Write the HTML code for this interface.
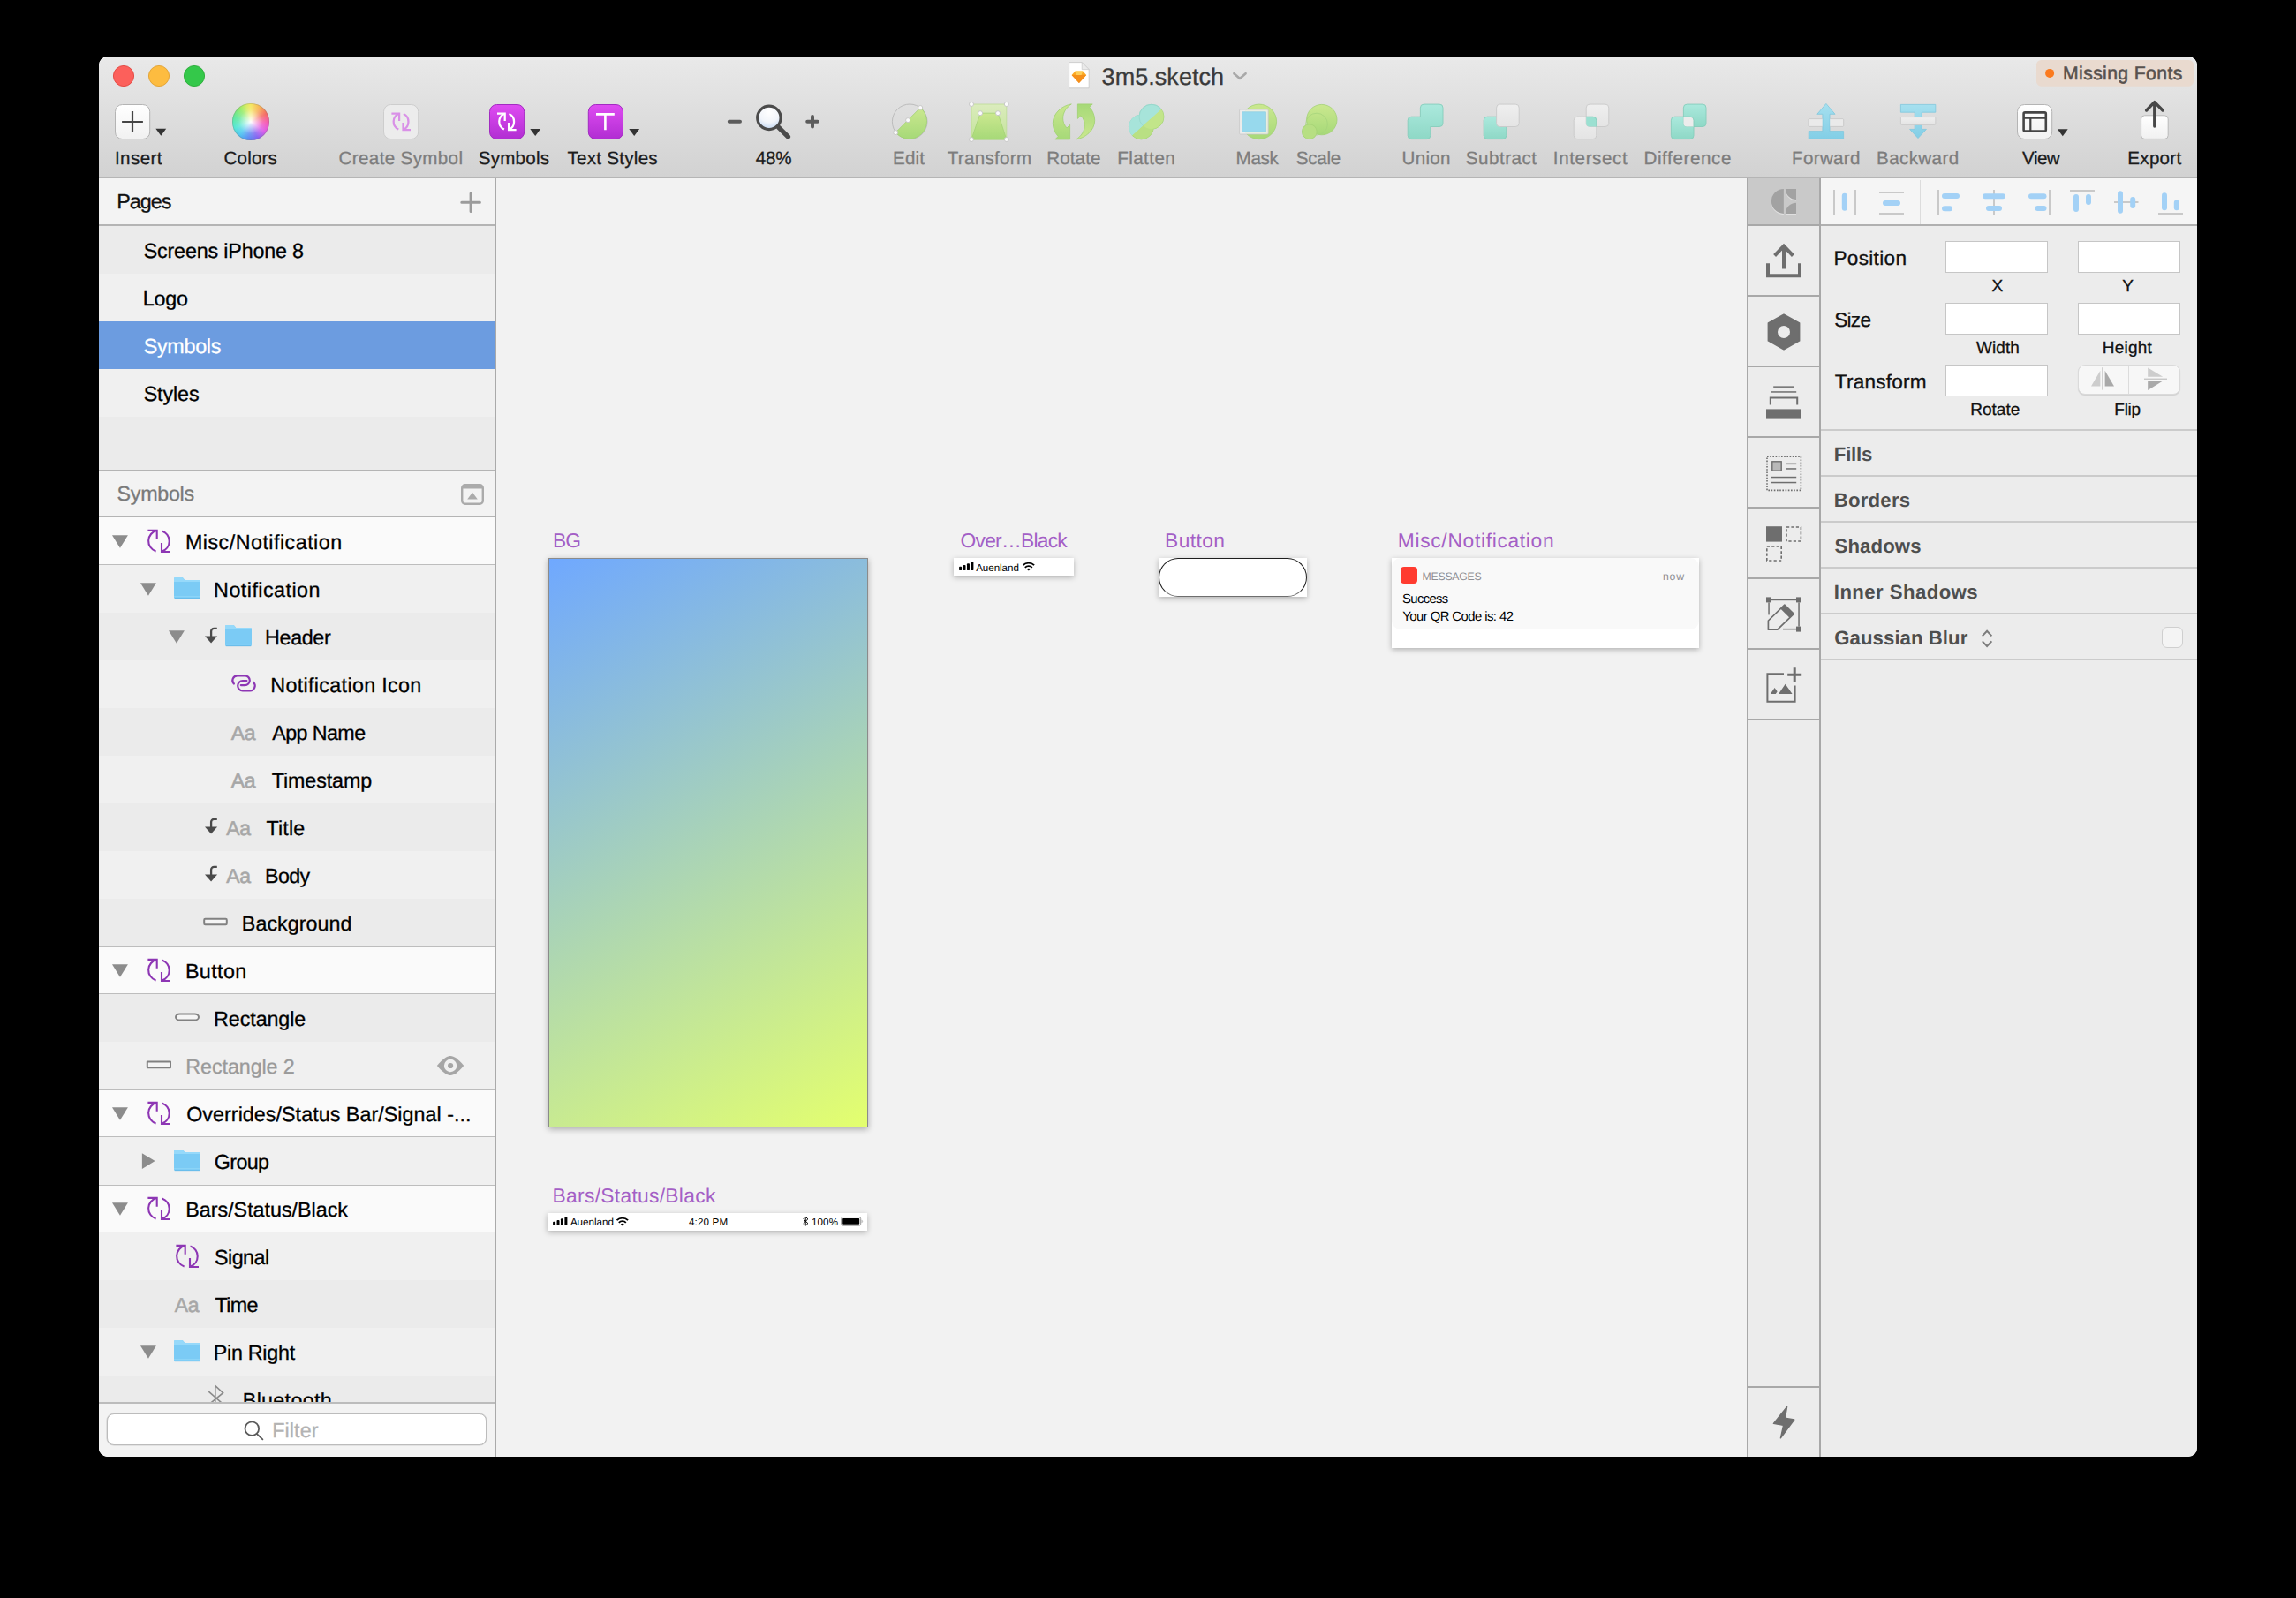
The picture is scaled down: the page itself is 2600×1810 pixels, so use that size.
<!DOCTYPE html>
<html><head><meta charset="utf-8"><title>3m5.sketch</title>
<style>
html,body{margin:0;padding:0;background:#000;}
body{width:2600px;height:1810px;position:relative;overflow:hidden;font-family:"Liberation Sans",sans-serif;}
.a{position:absolute;box-sizing:border-box;}
.t{position:absolute;white-space:pre;text-rendering:geometricPrecision;}
svg{position:absolute;overflow:visible;}

</style></head>
<body>
<div class="a" style="left:112px;top:64px;width:2376px;height:1586px;background:#f2f2f2;border-radius:10px 10px 10px 10px;"></div><div class="a" style="left:112px;top:64px;width:2376px;height:136px;background:linear-gradient(#e9e9e9,#e2e2e2 30%,#d2d2d2);border-radius:10px 10px 0 0;box-shadow:inset 0 1px 0 #f4f4f4;"></div><div class="a" style="left:112px;top:200px;width:2376px;height:2px;background:#b5b5b5;"></div><div class="a" style="left:112px;top:202px;width:448px;height:1448px;background:#f0f0f0;border-radius:0 0 0 10px;"></div><div class="a" style="left:560px;top:202px;width:2px;height:1448px;background:#aaaaaa;"></div><div class="a" style="left:112px;top:202px;width:448px;height:52px;background:#f3f3f3;"></div><div class="a" style="left:112px;top:254px;width:448px;height:2px;background:#b4b4b4;"></div><div class="a" style="left:112px;top:256px;width:448px;height:54px;background:#ebebeb;"></div><div class="a" style="left:112px;top:310px;width:448px;height:54px;background:#f0f0f0;"></div><div class="a" style="left:112px;top:364px;width:448px;height:54px;background:#6c9ce0;"></div><div class="a" style="left:112px;top:418px;width:448px;height:54px;background:#f0f0f0;"></div><div class="a" style="left:112px;top:472px;width:448px;height:60px;background:#ebebeb;"></div><div class="a" style="left:112px;top:532px;width:448px;height:2px;background:#b4b4b4;"></div><div class="a" style="left:112px;top:534px;width:448px;height:50px;background:#f3f3f3;"></div><div class="a" style="left:112px;top:584px;width:448px;height:2px;background:#b4b4b4;"></div><div class="a" style="left:112px;top:586px;width:448px;height:54px;background:#fafafa;"></div><div class="a" style="left:112px;top:639px;width:448px;height:1px;background:#bdbdbd;"></div><div class="a" style="left:112px;top:640px;width:448px;height:54px;background:#f0f0f0;"></div><div class="a" style="left:112px;top:694px;width:448px;height:54px;background:#ebebeb;"></div><div class="a" style="left:112px;top:748px;width:448px;height:54px;background:#f0f0f0;"></div><div class="a" style="left:112px;top:802px;width:448px;height:54px;background:#ebebeb;"></div><div class="a" style="left:112px;top:856px;width:448px;height:54px;background:#f0f0f0;"></div><div class="a" style="left:112px;top:910px;width:448px;height:54px;background:#ebebeb;"></div><div class="a" style="left:112px;top:964px;width:448px;height:54px;background:#f0f0f0;"></div><div class="a" style="left:112px;top:1018px;width:448px;height:54px;background:#ebebeb;"></div><div class="a" style="left:112px;top:1072px;width:448px;height:54px;background:#fafafa;"></div><div class="a" style="left:112px;top:1072px;width:448px;height:1px;background:#bdbdbd;"></div><div class="a" style="left:112px;top:1125px;width:448px;height:1px;background:#bdbdbd;"></div><div class="a" style="left:112px;top:1126px;width:448px;height:54px;background:#ebebeb;"></div><div class="a" style="left:112px;top:1180px;width:448px;height:54px;background:#f0f0f0;"></div><div class="a" style="left:112px;top:1234px;width:448px;height:54px;background:#fafafa;"></div><div class="a" style="left:112px;top:1234px;width:448px;height:1px;background:#bdbdbd;"></div><div class="a" style="left:112px;top:1287px;width:448px;height:1px;background:#bdbdbd;"></div><div class="a" style="left:112px;top:1288px;width:448px;height:54px;background:#f0f0f0;"></div><div class="a" style="left:112px;top:1342px;width:448px;height:54px;background:#fafafa;"></div><div class="a" style="left:112px;top:1342px;width:448px;height:1px;background:#bdbdbd;"></div><div class="a" style="left:112px;top:1395px;width:448px;height:1px;background:#bdbdbd;"></div><div class="a" style="left:112px;top:1396px;width:448px;height:54px;background:#f0f0f0;"></div><div class="a" style="left:112px;top:1450px;width:448px;height:54px;background:#ebebeb;"></div><div class="a" style="left:112px;top:1504px;width:448px;height:54px;background:#f0f0f0;"></div><div class="a" style="left:112px;top:1558px;width:448px;height:31px;background:#ebebeb;"></div><div class="a" style="left:112px;top:1589px;width:448px;height:61px;background:#f3f3f3;border-radius:0 0 0 10px;"></div><div class="a" style="left:112px;top:1588px;width:448px;height:2px;background:#bcbcbc;"></div><div class="a" style="left:121px;top:1601px;width:430px;height:36px;background:#fff;border:1px solid #bcbcbc;border-radius:8px;box-shadow:0 0 0 0.6px #d2d2d2;"></div><div class="a" style="left:1978px;top:202px;width:2px;height:1448px;background:#a8a8a8;"></div><div class="a" style="left:1980px;top:202px;width:80px;height:1448px;background:#ececec;"></div><div class="a" style="left:2060px;top:202px;width:2px;height:1448px;background:#a8a8a8;"></div><div class="a" style="left:1980px;top:202px;width:80px;height:52px;background:#c9c9c9;"></div><div class="a" style="left:1980px;top:254px;width:80px;height:2px;background:#a8a8a8;"></div><div class="a" style="left:1980px;top:334px;width:80px;height:2px;background:#a8a8a8;"></div><div class="a" style="left:1980px;top:414px;width:80px;height:2px;background:#a8a8a8;"></div><div class="a" style="left:1980px;top:494px;width:80px;height:2px;background:#a8a8a8;"></div><div class="a" style="left:1980px;top:574px;width:80px;height:2px;background:#a8a8a8;"></div><div class="a" style="left:1980px;top:654px;width:80px;height:2px;background:#a8a8a8;"></div><div class="a" style="left:1980px;top:734px;width:80px;height:2px;background:#a8a8a8;"></div><div class="a" style="left:1980px;top:814px;width:80px;height:2px;background:#a8a8a8;"></div><div class="a" style="left:1980px;top:1570px;width:80px;height:2px;background:#a8a8a8;"></div><div class="a" style="left:2062px;top:202px;width:426px;height:1448px;background:#ececec;border-radius:0 0 10px 0;"></div><div class="a" style="left:2062px;top:202px;width:426px;height:52px;background:#f5f5f5;"></div><div class="a" style="left:2062px;top:254px;width:426px;height:2px;background:#b0b0b0;"></div><div class="a" style="left:2174px;top:204px;width:1px;height:50px;background:#dcdcdc;"></div><div class="a" style="left:2062px;top:486px;width:426px;height:2px;background:#cbcbcb;"></div><div class="a" style="left:2062px;top:538px;width:426px;height:2px;background:#cbcbcb;"></div><div class="a" style="left:2062px;top:590px;width:426px;height:2px;background:#cbcbcb;"></div><div class="a" style="left:2062px;top:642px;width:426px;height:2px;background:#cbcbcb;"></div><div class="a" style="left:2062px;top:694px;width:426px;height:2px;background:#cbcbcb;"></div><div class="a" style="left:2062px;top:746px;width:426px;height:2px;background:#cbcbcb;"></div><div class="a" style="left:2203px;top:273px;width:116px;height:36px;background:#fff;border:1px solid #c6c6c6;"></div><div class="a" style="left:2353px;top:273px;width:116px;height:36px;background:#fff;border:1px solid #c6c6c6;"></div><div class="a" style="left:2203px;top:343px;width:116px;height:36px;background:#fff;border:1px solid #c6c6c6;"></div><div class="a" style="left:2353px;top:343px;width:116px;height:36px;background:#fff;border:1px solid #c6c6c6;"></div><div class="a" style="left:2203px;top:413px;width:116px;height:36px;background:#fff;border:1px solid #c6c6c6;"></div><div class="a" style="left:2353px;top:413px;width:116px;height:34px;background:#f7f7f7;border:1px solid #dadada;border-radius:8px;box-shadow:0 1px 1px rgba(0,0,0,.12);"></div><div class="a" style="left:2410px;top:414px;width:1px;height:32px;background:#dcdcdc;"></div><div class="a" style="left:2448px;top:710px;width:24px;height:24px;background:#f4f4f4;border:1px solid #cfcfcf;border-radius:6px;"></div><div class="a" style="left:621px;top:632px;width:362px;height:645px;background:linear-gradient(150.66deg,#6fa8ff 0%,#e4ff6e 100%);border:1px solid #8b8b8b;background-origin:border-box;box-shadow:0 2px 7px rgba(0,0,0,.3);"></div><div class="a" style="left:1080px;top:632px;width:136px;height:20px;background:#fff;box-shadow:0 2px 6px rgba(0,0,0,.27);"></div><div class="a" style="left:1312px;top:632px;width:168px;height:44px;background:#fff;box-shadow:0 2px 6px rgba(0,0,0,.27);"></div><div class="a" style="left:1312px;top:632px;width:168px;height:44px;background:#fff;border:1px solid #1e1e1e;border-bottom-color:#6e6e6e;border-radius:22px;"></div><div class="a" style="left:1576px;top:632px;width:348px;height:102px;background:#fff;box-shadow:0 2px 6px rgba(0,0,0,.27);"></div><div class="a" style="left:1576px;top:632px;width:348px;height:81px;background:#f9f9f9;border-radius:10px;"></div><div class="a" style="left:1586px;top:642px;width:19px;height:19px;background:#ff3b30;border-radius:4px;"></div><div class="a" style="left:620px;top:1374px;width:362px;height:20px;background:#fff;box-shadow:0 2px 6px rgba(0,0,0,.27);"></div><span class="t" style="left:261.8px;top:818.5px;font-size:23px;line-height:23px;color:#a7a7a7;-webkit-text-stroke:0.55px #a7a7a7;letter-spacing:-0.5px">Aa</span><span class="t" style="left:261.8px;top:872.5px;font-size:23px;line-height:23px;color:#a7a7a7;-webkit-text-stroke:0.55px #a7a7a7;letter-spacing:-0.5px">Aa</span><span class="t" style="left:256.3px;top:926.5px;font-size:23px;line-height:23px;color:#a7a7a7;-webkit-text-stroke:0.55px #a7a7a7;letter-spacing:-0.5px">Aa</span><span class="t" style="left:256.3px;top:980.5px;font-size:23px;line-height:23px;color:#a7a7a7;-webkit-text-stroke:0.55px #a7a7a7;letter-spacing:-0.5px">Aa</span><span class="t" style="left:197.8px;top:1466.5px;font-size:23px;line-height:23px;color:#a7a7a7;-webkit-text-stroke:0.55px #a7a7a7;letter-spacing:-0.5px">Aa</span><svg class="a" style="left:0;top:0;width:2600px;height:1810px;" viewBox="0 0 2600 1810"><defs><clipPath id="cl1"><rect x="112" y="1558" width="448" height="30"/></clipPath></defs><path d="M127 606.2h17.9l-8.95 14.6z" fill="#8c8c8c"/><g fill="none" stroke="#8d36b4" stroke-width="2.1" stroke-linejoin="miter"><path d="M177.6 600.9A12.2 12.2 0 0 0 176.6 624.4"/><path d="M183.5 601.5A12.2 12.2 0 0 1 183.4 624.6"/><path d="M167.4 600.9H177.7V610.7"/><path d="M183 615V625H193"/></g><path d="M127 1092.2h17.9l-8.95 14.6z" fill="#8c8c8c"/><g fill="none" stroke="#8d36b4" stroke-width="2.1" stroke-linejoin="miter"><path d="M177.6 1086.9A12.2 12.2 0 0 0 176.6 1110.4"/><path d="M183.5 1087.5A12.2 12.2 0 0 1 183.4 1110.6"/><path d="M167.4 1086.9H177.7V1096.7"/><path d="M183 1101V1111H193"/></g><path d="M127 1254.2h17.9l-8.95 14.6z" fill="#8c8c8c"/><g fill="none" stroke="#8d36b4" stroke-width="2.1" stroke-linejoin="miter"><path d="M177.6 1248.9A12.2 12.2 0 0 0 176.6 1272.4"/><path d="M183.5 1249.5A12.2 12.2 0 0 1 183.4 1272.6"/><path d="M167.4 1248.9H177.7V1258.7"/><path d="M183 1263V1273H193"/></g><path d="M127 1362.2h17.9l-8.95 14.6z" fill="#8c8c8c"/><g fill="none" stroke="#8d36b4" stroke-width="2.1" stroke-linejoin="miter"><path d="M177.6 1356.9A12.2 12.2 0 0 0 176.6 1380.4"/><path d="M183.5 1357.5A12.2 12.2 0 0 1 183.4 1380.6"/><path d="M167.4 1356.9H177.7V1366.7"/><path d="M183 1371V1381H193"/></g><path d="M159 660.2h17.9l-8.95 14.6z" fill="#8c8c8c"/><g><path d="M198.5 654h7.3c.8 0 1.3.3 1.8.9l1.6 2.1h16.3c.9 0 1.5.6 1.5 1.5v17.9c0 .9-.6 1.5-1.5 1.5h-27c-.9 0-1.5-.6-1.5-1.5v-20.9c0-.9.6-1.5 1.5-1.5z" fill="#7bcbf5"/><path d="M198.5 654h7.3c.8 0 1.3.3 1.8.9l1.6 2.1h16.3c.9 0 1.5.6 1.5 1.5v.6h-30v-3.6c0-.9.6-1.5 1.5-1.5z" fill="#96d9fa"/><rect x="197" y="675.2" width="30" height="1" fill="#8fd6f8"/><rect x="197.8" y="677.2" width="28.4" height="1" fill="#5fb4e4" opacity=".7"/></g><path d="M191 714.2h17.9l-8.95 14.6z" fill="#8c8c8c"/><path d="M232 720.5h14.1l-7.05 7.9z" fill="#4a4a4a"/><path d="M239.1 721.3v-6.2a3.3 3.3 0 0 1 3.3 -3.3h3.4" fill="none" stroke="#4a4a4a" stroke-width="2.3"/><g><path d="M256.5 708h7.3c.8 0 1.3.3 1.8.9l1.6 2.1h16.3c.9 0 1.5.6 1.5 1.5v17.9c0 .9-.6 1.5-1.5 1.5h-27c-.9 0-1.5-.6-1.5-1.5v-20.9c0-.9.6-1.5 1.5-1.5z" fill="#7bcbf5"/><path d="M256.5 708h7.3c.8 0 1.3.3 1.8.9l1.6 2.1h16.3c.9 0 1.5.6 1.5 1.5v.6h-30v-3.6c0-.9.6-1.5 1.5-1.5z" fill="#96d9fa"/><rect x="255" y="729.2" width="30" height="1" fill="#8fd6f8"/><rect x="255.8" y="731.2" width="28.4" height="1" fill="#5fb4e4" opacity=".7"/></g><g fill="none" stroke="#8d36b4" stroke-width="2.2" stroke-linecap="round"><path d="M264.9 774.5A5.4 5.4 0 0 1 268.7 765.3H277.4A5.4 5.4 0 0 1 277.4 776.1H272.8"/><path d="M279.4 771.1H274.8A5.6 5.6 0 0 0 274.8 782.3H283.1A5.6 5.6 0 0 0 287.0 772.7"/></g><path d="M232 936.5h14.1l-7.05 7.9z" fill="#4a4a4a"/><path d="M239.1 937.3v-6.2a3.3 3.3 0 0 1 3.3 -3.3h3.4" fill="none" stroke="#4a4a4a" stroke-width="2.3"/><path d="M232 990.5h14.1l-7.05 7.9z" fill="#4a4a4a"/><path d="M239.1 991.3v-6.2a3.3 3.3 0 0 1 3.3 -3.3h3.4" fill="none" stroke="#4a4a4a" stroke-width="2.3"/><rect x="231.2" y="1040.8" width="25.6" height="6.4" rx="1.2" fill="#f5f5f5" stroke="#818181" stroke-width="2"/><rect x="199" y="1148.4" width="26" height="7.199999999999999" rx="4.6" fill="#f5f5f5" stroke="#818181" stroke-width="2"/><rect x="166.8" y="1202.4" width="26.2" height="6.800000000000001" rx="0.2" fill="#f5f5f5" stroke="#818181" stroke-width="2"/><path d="M494.9 1207C501.5 1199.3 506 1196 510.1 1196C514.2 1196 518.7 1199.3 525.2 1207C518.7 1214.7 514.2 1218 510.1 1218C506 1218 501.5 1214.7 494.9 1207Z" fill="#a6a6a6"/><circle cx="510.1" cy="1207" r="7.2" fill="#f0f0f0"/><circle cx="510.1" cy="1207" r="3.1" fill="#a6a6a6"/><path d="M160.9 1306.2v17.8l14.7 -8.9z" fill="#8c8c8c"/><g><path d="M198.5 1302h7.3c.8 0 1.3.3 1.8.9l1.6 2.1h16.3c.9 0 1.5.6 1.5 1.5v17.9c0 .9-.6 1.5-1.5 1.5h-27c-.9 0-1.5-.6-1.5-1.5v-20.9c0-.9.6-1.5 1.5-1.5z" fill="#7bcbf5"/><path d="M198.5 1302h7.3c.8 0 1.3.3 1.8.9l1.6 2.1h16.3c.9 0 1.5.6 1.5 1.5v.6h-30v-3.6c0-.9.6-1.5 1.5-1.5z" fill="#96d9fa"/><rect x="197" y="1323.2" width="30" height="1" fill="#8fd6f8"/><rect x="197.8" y="1325.2" width="28.4" height="1" fill="#5fb4e4" opacity=".7"/></g><g fill="none" stroke="#8d36b4" stroke-width="2.1" stroke-linejoin="miter"><path d="M209.6 1410.9A12.2 12.2 0 0 0 208.6 1434.4"/><path d="M215.5 1411.5A12.2 12.2 0 0 1 215.4 1434.6"/><path d="M199.4 1410.9H209.7V1420.7"/><path d="M215 1425V1435H225"/></g><path d="M159 1524.2h17.9l-8.95 14.6z" fill="#8c8c8c"/><g><path d="M198.5 1518h7.3c.8 0 1.3.3 1.8.9l1.6 2.1h16.3c.9 0 1.5.6 1.5 1.5v17.9c0 .9-.6 1.5-1.5 1.5h-27c-.9 0-1.5-.6-1.5-1.5v-20.9c0-.9.6-1.5 1.5-1.5z" fill="#7bcbf5"/><path d="M198.5 1518h7.3c.8 0 1.3.3 1.8.9l1.6 2.1h16.3c.9 0 1.5.6 1.5 1.5v.6h-30v-3.6c0-.9.6-1.5 1.5-1.5z" fill="#96d9fa"/><rect x="197" y="1539.2" width="30" height="1" fill="#8fd6f8"/><rect x="197.8" y="1541.2" width="28.4" height="1" fill="#5fb4e4" opacity=".7"/></g><g clip-path="url(#cl1)" fill="none" stroke="#8a8a8a" stroke-width="1.6"><path d="M236.3 1576.2L252.6 1590.4L243.8 1598V1569.6L252.6 1577.7L236.3 1591"/></g><path d="M533.1 219v20.4M522.8 229.2h20.6" stroke="#9b9b9b" stroke-width="3" stroke-linecap="round" fill="none"/><rect x="523.2" y="549.2" width="23.6" height="21.6" rx="3.5" fill="none" stroke="#ababab" stroke-width="2.4"/><path d="M523.2 553.5v-1a3.5 3.5 0 0 1 3.5-3.5h16.6a3.5 3.5 0 0 1 3.5 3.5v1z" fill="#ababab"/><path d="M529.2 565.4h11.6l-5.8-7.6z" fill="#ababab"/><g fill="none" stroke="#5a5a5a" stroke-width="1.8"><circle cx="285.3" cy="1618.2" r="7.8"/><path d="M290.9 1624.2L297.4 1630.4" stroke-linecap="round"/></g></svg><div class="a" style="left:112px;top:1558px;width:448px;height:30px;overflow:hidden"><span class="t" style="left:162.8px;top:17.4px;font-size:23.3px;line-height:23.3px;color:#000;letter-spacing:0.3px;-webkit-text-stroke:0.3px">Bluetooth</span></div><svg class="a" style="left:0;top:0;width:2600px;height:1810px;" viewBox="0 0 2600 1810"><defs><linearGradient id="gBtn" x1="0" y1="0" x2="0" y2="1"><stop offset="0" stop-color="#ffffff"/><stop offset="1" stop-color="#f1f1f1"/></linearGradient><linearGradient id="gPur" x1="0" y1="0" x2="0" y2="1"><stop offset="0" stop-color="#df4bf2"/><stop offset="1" stop-color="#b12ed2"/></linearGradient><linearGradient id="gGrn" x1="0" y1="0" x2="0" y2="1"><stop offset="0" stop-color="#cbe88f"/><stop offset="1" stop-color="#a6d978"/></linearGradient><linearGradient id="gGrnL" x1="0" y1="0" x2="0" y2="1"><stop offset="0" stop-color="#dbecbd"/><stop offset="1" stop-color="#c4e39b"/></linearGradient><linearGradient id="gTeal" x1="0" y1="0" x2="0" y2="1"><stop offset="0" stop-color="#abe9dd"/><stop offset="1" stop-color="#8ed8c6"/></linearGradient><linearGradient id="gBlue" x1="0" y1="0" x2="0" y2="1"><stop offset="0" stop-color="#a6e0ef"/><stop offset="1" stop-color="#82cee6"/></linearGradient><linearGradient id="gGray" x1="0" y1="0" x2="0" y2="1"><stop offset="0" stop-color="#efefef"/><stop offset="1" stop-color="#e4e4e4"/></linearGradient><radialGradient id="gLens" cx="0.5" cy="0.25" r="0.8"><stop offset="0" stop-color="#ffffff"/><stop offset="0.55" stop-color="#f2f5fa"/><stop offset="1" stop-color="#bcd3f1"/></radialGradient><radialGradient id="gWheelW" cx="0.5" cy="0.5" r="0.5"><stop offset="0" stop-color="#fff" stop-opacity="1"/><stop offset="0.12" stop-color="#fff" stop-opacity=".95"/><stop offset="0.75" stop-color="#fff" stop-opacity="0.12"/><stop offset="1" stop-color="#fff" stop-opacity="0"/></radialGradient><linearGradient id="gDia" x1="0" y1="0" x2="0" y2="1"><stop offset="0" stop-color="#fdb72b"/><stop offset="1" stop-color="#f47f16"/></linearGradient><clipPath id="cFlatA"><path d="M1270 164.5L1327.6 112.4V100H1260V164.5Z"/></clipPath><clipPath id="cFlatB"><path d="M1270 164.5L1327.6 112.4V175H1270Z"/></clipPath><clipPath id="cInt"><rect x="1796.2" y="118.1" width="25.6" height="25.4" rx="4"/></clipPath><clipPath id="cDif"><rect x="1906.4" y="118.1" width="25.6" height="25.4" rx="4"/></clipPath></defs><circle cx="140" cy="86" r="11.6" fill="#fc605b" stroke="#e1463f" stroke-width="0.9"/><circle cx="180" cy="86" r="11.6" fill="#fdbc40" stroke="#e0a136" stroke-width="0.9"/><circle cx="220" cy="86" r="11.6" fill="#34c84a" stroke="#2aab38" stroke-width="0.9"/><rect x="130.5" y="118.5" width="39.2" height="39" rx="8" fill="url(#gBtn)" stroke="#b4b4b4"/><path d="M138.1 138h23.8M150 126.1v24" stroke="#444" stroke-width="2.2" fill="none"/><path d="M176.4 145.8h11.8l-5.9 8z" fill="#333"/><rect x="434.5" y="118.5" width="39.2" height="39" rx="8" fill="#ececec" stroke="#cdcdcd"/><g fill="none" stroke="#d991e7" stroke-width="2.25"><path d="M452.0 128.70000000000002A9.7 9.7 0 0 0 451.29999999999995 146.6"/><path d="M456.9 129.1A9.7 9.7 0 0 1 456.79999999999995 146.70000000000002"/><path d="M443.4 128.70000000000002H452.09999999999997V136.9"/><path d="M456.5 139.1V147.1H465.0"/></g><rect x="554.5" y="118.5" width="39.2" height="39" rx="8" fill="url(#gPur)" stroke="#a22bc1"/><g fill="none" stroke="#fff" stroke-width="2.25"><path d="M571.6 128.70000000000002A9.7 9.7 0 0 0 570.9 146.6"/><path d="M576.5 129.1A9.7 9.7 0 0 1 576.4 146.70000000000002"/><path d="M563 128.70000000000002H571.7V136.9"/><path d="M576.1 139.1V147.1H584.6"/></g><path d="M600.3 146h11.8l-5.9 8z" fill="#333"/><rect x="666.3" y="118.5" width="39.2" height="39" rx="8" fill="url(#gPur)" stroke="#a22bc1"/><path d="M675 129.4h20.8M685.4 129.4v17.8" stroke="#fff" stroke-width="2.6" fill="none"/><path d="M712.3 146h11.8l-5.9 8z" fill="#333"/><path d="M825.8 137.7h12.2M914.2 137.7h11.6M920 131.9v11.6" stroke="#5c5c5c" stroke-width="4" stroke-linecap="round" fill="none"/><circle cx="870.9" cy="133.4" r="13.2" fill="url(#gLens)" stroke="#4b4b4b" stroke-width="3.2"/><path d="M881.8 144.3L892.4 154.8" stroke="#4b4b4b" stroke-width="5.4" stroke-linecap="round"/><circle cx="1030.2" cy="137.8" r="19.8" fill="none" stroke="#bcbcbc" stroke-width="1"/><path d="M1014.2 150A19.9 19.9 0 1 0 1042.2 122Z" fill="url(#gGrn)" stroke="#9fd071" stroke-width="0.8"/><circle cx="1042.2" cy="122" r="2.5" fill="#fbfbfb" stroke="#c4c4c4" stroke-width="0.9"/><circle cx="1028.1" cy="136.1" r="2.5" fill="#fbfbfb" stroke="#c4c4c4" stroke-width="0.9"/><circle cx="1014.2" cy="150.1" r="2.5" fill="#fbfbfb" stroke="#c4c4c4" stroke-width="0.9"/><rect x="1100" y="118" width="39.8" height="40" rx="1.5" fill="url(#gGrnL)" stroke="#bddc96" stroke-width="0.8"/><path d="M1110.1 128.2H1130L1139.8 158H1100Z" fill="url(#gGrn)" stroke="#a3d275" stroke-width="0.8"/><circle cx="1100" cy="118" r="2.5" fill="#fbfbfb" stroke="#c4c4c4" stroke-width="0.9"/><circle cx="1139.8" cy="118" r="2.5" fill="#fbfbfb" stroke="#c4c4c4" stroke-width="0.9"/><circle cx="1100" cy="158" r="2.5" fill="#fbfbfb" stroke="#c4c4c4" stroke-width="0.9"/><circle cx="1139.8" cy="158" r="2.5" fill="#fbfbfb" stroke="#c4c4c4" stroke-width="0.9"/><circle cx="1110.1" cy="128.2" r="2.5" fill="#fbfbfb" stroke="#c4c4c4" stroke-width="0.9"/><circle cx="1130" cy="128.2" r="2.5" fill="#fbfbfb" stroke="#c4c4c4" stroke-width="0.9"/><path d="M1213.3 117.9C1203 119.5 1192.3 128 1192.3 139.5C1192.3 145 1194.5 150.5 1198.2 154.5L1194.8 157.9H1211.6V141.4L1208 145C1205 141.5 1203.7 138 1203.7 134C1203.7 127.5 1207.5 121.5 1213.3 117.9Z" fill="url(#gGrn)" stroke="#9fd071" stroke-width="0.8"/><path d="M1213.3 117.9C1203 119.5 1192.3 128 1192.3 139.5C1192.3 145 1194.5 150.5 1198.2 154.5L1194.8 157.9H1211.6V141.4L1208 145C1205 141.5 1203.7 138 1203.7 134C1203.7 127.5 1207.5 121.5 1213.3 117.9Z" fill="url(#gGrn)" stroke="#9fd071" stroke-width="0.8" transform="rotate(180 1216 137.9)"/><g clip-path="url(#cFlatA)" fill="#a7e4da" stroke="#8fd3c6" stroke-width="0.8"><circle cx="1292.4" cy="143.9" r="14"/><circle cx="1304" cy="132.3" r="14"/></g><g clip-path="url(#cFlatB)" fill="url(#gGrn)" stroke="#a3d275" stroke-width="0.8"><circle cx="1292.4" cy="143.9" r="14"/><circle cx="1304" cy="132.3" r="14"/></g><g clip-path="url(#cFlatA)"><circle cx="1292.4" cy="143.9" r="14" fill="#a7e4da"/><circle cx="1304" cy="132.3" r="13.6" fill="#a7e4da"/><circle cx="1304" cy="132.3" r="14" fill="none" stroke="#97d8cc" stroke-width="0.8"/></g><g clip-path="url(#cFlatB)"><circle cx="1292.4" cy="143.9" r="13.6" fill="#b9e083"/><circle cx="1304" cy="132.3" r="13.6" fill="#c2e58a"/></g><circle cx="1425.8" cy="137.9" r="19.8" fill="url(#gGrn)" stroke="#a3d275" stroke-width="0.8"/><rect x="1403.6" y="124" width="32.6" height="28" rx="1" fill="#f0f0f0" fill-opacity=".85" stroke="#c6c6c6" stroke-width="0.8"/><rect x="1406.6" y="126.8" width="26.8" height="22.4" fill="#97d9ed" stroke="#85c9df" stroke-width="0.6"/><circle cx="1496.8" cy="135.6" r="17.2" fill="url(#gGrn)" stroke="#a3d275" stroke-width="0.8"/><circle cx="1491" cy="140.6" r="12.4" fill="none" stroke="#a6d47c" stroke-width="0.8"/><circle cx="1482.8" cy="149.2" r="8.4" fill="#b7df83" stroke="#a3d275" stroke-width="0.8"/><path d="M1612.4 118.1H1630a4 4 0 0 1 4 4V139.5a4 4 0 0 1 -4 4H1619.8V153.6a4 4 0 0 1 -4 4H1598.2a4 4 0 0 1 -4 -4V136.2a4 4 0 0 1 4 -4H1608.4V122.1a4 4 0 0 1 4 -4Z" fill="url(#gTeal)" stroke="#86cdbb" stroke-width="0.9"/><rect x="1680.2" y="132.2" width="25.6" height="25.4" rx="4" fill="url(#gTeal)" stroke="#86cdbb" stroke-width="0.9"/><rect x="1694.6" y="118.1" width="25.6" height="25.4" rx="4" fill="url(#gGray)" stroke="#c8c8c8" stroke-width="0.9"/><rect x="1782.2" y="132.2" width="25.6" height="25.4" rx="4" fill="url(#gGray)" stroke="#c8c8c8" stroke-width="0.9"/><rect x="1796.2" y="118.1" width="25.6" height="25.4" rx="4" fill="url(#gGray)" stroke="#c8c8c8" stroke-width="0.9"/><g clip-path="url(#cInt)"><rect x="1782.2" y="132.2" width="25.6" height="25.4" rx="4" fill="#9be0d1" stroke="#86cdbb" stroke-width="0.9"/></g><rect x="1892.4" y="132.2" width="25.6" height="25.4" rx="4" fill="url(#gTeal)" stroke="#86cdbb" stroke-width="0.9"/><rect x="1906.4" y="118.1" width="25.6" height="25.4" rx="4" fill="url(#gTeal)" stroke="#86cdbb" stroke-width="0.9"/><g clip-path="url(#cDif)"><rect x="1892.4" y="132.2" width="25.6" height="25.4" rx="4" fill="#ececec" stroke="#86cdbb" stroke-width="0.9"/></g><rect x="2048.2" y="134.6" width="39.4" height="8.8" rx="1" fill="url(#gGray)" stroke="#c6c6c6" stroke-width="0.8"/><path d="M2067.9 117.4L2078 129.3H2072V148.6H2087.6V157.4H2048.2V148.6H2063.9V129.3H2057.8Z" fill="url(#gBlue)" stroke="#7fc6dd" stroke-width="0.8"/><rect x="2048.2" y="134.6" width="15.3" height="8.8" fill="#eaeaea"/><rect x="2072.4" y="134.6" width="15.2" height="8.8" fill="#eaeaea"/><path d="M2048.6 134.6h14.9M2048.6 143.4h14.9M2072.4 134.6h14.8M2072.4 143.4h14.8M2048.2 135v8M2087.6 135v8" stroke="#c8c8c8" stroke-width="0.8" fill="none"/><path d="M2152.4 118.4H2191.8V127.2H2176.2V146.4H2181.4L2172 156.6L2162.6 146.4H2168.2V127.2H2152.4Z" fill="url(#gBlue)" stroke="#7fc6dd" stroke-width="0.8"/><rect x="2152.4" y="132.6" width="39.4" height="8.8" rx="1" fill="url(#gGray)" stroke="#c6c6c6" stroke-width="0.8"/><rect x="2284.5" y="118.5" width="39.2" height="39" rx="8" fill="url(#gBtn)" stroke="#b4b4b4"/><rect x="2291.6" y="127.4" width="25.2" height="21.2" rx="1.5" fill="none" stroke="#454545" stroke-width="2.6"/><path d="M2291.6 133.6h25.2M2299.3 133.6v15" stroke="#454545" stroke-width="2.2" fill="none"/><path d="M2329.9 146.2h11.8l-5.9 8z" fill="#333"/><rect x="2424.6" y="130.8" width="30.6" height="26.6" rx="4" fill="url(#gBtn)" stroke="#b9b9b9"/><path d="M2439.8 143V116.6M2430.6 125L2439.8 115.6L2449 125" fill="none" stroke="#474747" stroke-width="3.4" stroke-linecap="round" stroke-linejoin="round"/><path d="M1210.6 70.6h14.6l8 8v21.2h-22.6z" fill="#fff" stroke="#c9c9c9" stroke-width="0.9"/><path d="M1225.2 70.6v8h8z" fill="#eaeaea" stroke="#c9c9c9" stroke-width="0.7"/><path d="M1217.6 80.4h8.6l4 4.6l-8.3 9l-8.3-9z" fill="url(#gDia)"/><path d="M1213.6 85h16.6l-8.3 9z" fill="#f5901b"/><path d="M1217.6 80.4l1.6 4.6h5.4l1.6-4.6z" fill="#fecf5a"/><path d="M1397.4 83.2l6.6 5.8l6.6-5.8" fill="none" stroke="#a9a9a9" stroke-width="2.6" stroke-linecap="round" stroke-linejoin="round"/><rect x="2306" y="68" width="178" height="29.7" rx="5.5" fill="#e9dacf"/><circle cx="2321.1" cy="82.9" r="5" fill="#fb7a1e"/></svg><div class="a" style="left:263px;top:117.2px;width:41.6px;height:41.6px;border-radius:50%;background:conic-gradient(from 0deg,#f4e65a 0deg,#f7b24c 30deg,#f4645c 62deg,#f44fb4 95deg,#d955e8 125deg,#7b5cf0 158deg,#4f86f2 190deg,#49c7f0 222deg,#4fe6d2 250deg,#58e79a 285deg,#8eea62 320deg,#d6ea5a 345deg,#f4e65a 360deg);box-shadow:inset 0 0 0 0.8px rgba(120,120,120,.35)"></div><div class="a" style="left:263px;top:117.2px;width:41.6px;height:41.6px;border-radius:50%;background:radial-gradient(circle at 50% 50%,rgba(255,255,255,1) 0%,rgba(255,255,255,.85) 8%,rgba(255,255,255,.2) 45%,rgba(255,255,255,0) 72%)"></div><svg class="a" style="left:0;top:0;width:2600px;height:1810px;" viewBox="0 0 2600 1810"><path d="M2019.9 213.9A14 14 0 0 0 2019.9 241.9ZM2021.9 214H2034V226.1A12.1 12.1 0 0 1 2021.9 214ZM2034 241.9H2021.9A12.1 12.1 0 0 1 2034 229.8Z" fill="#e0e0e0" transform="translate(0 1.3)"/><path d="M2019.9 213.9A14 14 0 0 0 2019.9 241.9ZM2021.9 214H2034V226.1A12.1 12.1 0 0 1 2021.9 214ZM2034 241.9H2021.9A12.1 12.1 0 0 1 2034 229.8Z" fill="#a2a2a2"/><rect x="2076" y="215" width="2" height="28" fill="#c9c9c9"/><rect x="2100" y="215" width="2" height="28" fill="#c9c9c9"/><rect x="2085.8" y="218.8" width="6.0" height="20.0" rx="3.0" fill="#a3d1f6"/><rect x="2128" y="217" width="28.0" height="2" fill="#c9c9c9"/><rect x="2128" y="241" width="28.0" height="2" fill="#c9c9c9"/><rect x="2132" y="227" width="20.0" height="6.0" rx="3.0" fill="#a3d1f6"/><rect x="2194" y="215" width="2" height="28" fill="#c9c9c9"/><rect x="2199" y="219" width="20.0" height="6.0" rx="3.0" fill="#a3d1f6"/><rect x="2199" y="233.2" width="12.0" height="6.0" rx="3.0" fill="#a3d1f6"/><rect x="2257" y="215" width="2" height="28" fill="#c9c9c9"/><rect x="2245" y="219.3" width="26.0" height="6.0" rx="3.0" fill="#a3d1f6"/><rect x="2249" y="233" width="18.0" height="6.0" rx="3.0" fill="#a3d1f6"/><rect x="2320" y="215" width="2" height="28" fill="#c9c9c9"/><rect x="2297" y="219.3" width="20.5" height="6.0" rx="3.0" fill="#a3d1f6"/><rect x="2304.5" y="233" width="13.0" height="6.0" rx="3.0" fill="#a3d1f6"/><rect x="2344" y="215" width="28.0" height="2" fill="#c9c9c9"/><rect x="2348" y="220" width="6.0" height="20.0" rx="3.0" fill="#a3d1f6"/><rect x="2362" y="220" width="6.0" height="12.0" rx="3.0" fill="#a3d1f6"/><rect x="2394" y="228" width="27.5" height="2" fill="#c9c9c9"/><rect x="2398" y="216.3" width="6.0" height="25.4" rx="3.0" fill="#a3d1f6"/><rect x="2412.2" y="223" width="6.0" height="13.0" rx="3.0" fill="#a3d1f6"/><rect x="2444" y="241" width="28.0" height="2" fill="#c9c9c9"/><rect x="2448" y="218.2" width="6.0" height="20.0" rx="3.0" fill="#a3d1f6"/><rect x="2461.8" y="226.4" width="6.0" height="11.8" rx="3.0" fill="#a3d1f6"/><g fill="none" stroke="#6e6e6e" stroke-width="4"><path d="M2020 304.5V280M2009.6 289.5L2020 278.7L2030.4 289.5"/><path d="M2002 298.2V312.2H2038V298.2"/></g><path d="M2020 356.2L2037.6 366V385.9L2020 395.8L2002.4 385.9V366Z" fill="#6e6e6e" stroke="#6e6e6e" stroke-width="1.6" stroke-linejoin="round"/><circle cx="2020" cy="376" r="7" fill="#ececec"/><g fill="#6e6e6e"><rect x="2008.2" y="437.4" width="23.6" height="1.5"/><rect x="2005.8" y="443.2" width="28.4" height="1.5"/><path d="M2003.8 458.4V449.4H2036.2V458.4H2034.2V451.4H2005.8V458.4Z"/><rect x="2000" y="463.4" width="40" height="11.2"/></g><rect x="2001" y="517.2" width="38.4" height="38.2" fill="none" stroke="#6e6e6e" stroke-width="1.6" stroke-dasharray="1.6 1.6"/><rect x="2006.8" y="522.8" width="10.4" height="10.4" fill="#b8b8b8" stroke="#6e6e6e" stroke-width="1.4"/><g fill="#6e6e6e"><rect x="2022.2" y="524.6" width="12" height="1.5"/><rect x="2022.2" y="530.2" width="12" height="1.5"/><rect x="2005.8" y="539.8" width="28.4" height="1.5"/><rect x="2005.8" y="545.8" width="28.4" height="1.5"/></g><rect x="2000" y="596.2" width="18" height="17.4" fill="#6e6e6e"/><g fill="none" stroke="#6e6e6e" stroke-width="1.6" stroke-dasharray="3.2 2.2"><rect x="2023" y="597" width="16.4" height="16"/><rect x="2000.8" y="619" width="16.4" height="16"/></g><g fill="#6e6e6e"><rect x="2000" y="676.4" width="6" height="6"/><rect x="2034" y="676.4" width="6" height="6"/><rect x="2034" y="709.6" width="6" height="6"/><rect x="2006" y="678.7" width="28" height="1.5"/><rect x="2036.3" y="682.4" width="1.5" height="27.2"/><rect x="2002.3" y="682.4" width="1.5" height="14"/><rect x="2019" y="711.9" width="15" height="1.5"/></g><path d="M2002.4 703L2020.8 685.2L2031.2 695.4L2012.8 713.2H2002.4Z" fill="none" stroke="#6e6e6e" stroke-width="1.7" stroke-linejoin="round"/><path d="M2016.2 689.6L2020.8 685.2L2031.2 695.4L2026.6 699.8Z" fill="#6e6e6e"/><path d="M2020 763.2H2001.4V794.8H2032.6V776.4" fill="none" stroke="#6e6e6e" stroke-width="2"/><path d="M2032.2 756.2V772.2M2024.2 764.2H2040.2" stroke="#6e6e6e" stroke-width="3" fill="none"/><path d="M2014 786L2021.7 774.8L2029.6 786ZM2004.8 786L2009.6 779L2012.6 783.2L2010.8 786Z" fill="#6e6e6e"/><path d="M2023.6 1593.4L2008.4 1612.4L2019.6 1614.4L2016.4 1628.8L2031.8 1608L2021.4 1606.2Z" fill="#6e6e6e" stroke="#6e6e6e" stroke-width="1.4" stroke-linejoin="round"/><rect x="2380.4" y="416.2" width="1.2" height="25.4" fill="#b8b8b8"/><path d="M2368 437.6L2378.4 419.8V437.6Z" fill="#cdcdcd"/><path d="M2383.6 419.8L2394 437.6H2383.6Z" fill="#a9a9a9"/><rect x="2428" y="428.7" width="26" height="1" fill="#b4b4b4"/><path d="M2432.2 426.8V416.5L2449.2 426.8Z" fill="#cdcdcd"/><path d="M2432.2 431.5H2449.2L2432.2 442.1Z" fill="#a9a9a9"/><path d="M2244.8 720.4L2250.1 714.8L2255.4 720.4M2244.8 726.4L2250.1 732L2255.4 726.4" fill="none" stroke="#7c7c7c" stroke-width="2"/></svg><svg class="a" style="left:0;top:0;width:2600px;height:1810px;" viewBox="0 0 2600 1810"><rect x="1086.10" y="641.80" width="3" height="4.3" rx="0.9" fill="#000"/><rect x="1090.53" y="640.10" width="3" height="6.0" rx="0.9" fill="#000"/><rect x="1094.96" y="638.30" width="3" height="7.8" rx="0.9" fill="#000"/><rect x="1099.39" y="636.50" width="3" height="9.6" rx="0.9" fill="#000"/><g fill="none" stroke="#000" stroke-width="1.9" stroke-linecap="butt"><path d="M1158.50 640.20A8.9 8.9 0 0 1 1171.10 640.20"/><path d="M1160.80 642.80A5.6 5.6 0 0 1 1168.80 642.80"/></g><path d="M1162.80 644.70A2.8 2.8 0 0 1 1166.80 644.70L1164.80 646.60Z" fill="#000"/><rect x="626.10" y="1383.80" width="3" height="4.3" rx="0.9" fill="#000"/><rect x="630.53" y="1382.10" width="3" height="6.0" rx="0.9" fill="#000"/><rect x="634.96" y="1380.30" width="3" height="7.8" rx="0.9" fill="#000"/><rect x="639.39" y="1378.50" width="3" height="9.6" rx="0.9" fill="#000"/><g fill="none" stroke="#000" stroke-width="1.9" stroke-linecap="butt"><path d="M698.50 1382.20A8.9 8.9 0 0 1 711.10 1382.20"/><path d="M700.80 1384.80A5.6 5.6 0 0 1 708.80 1384.80"/></g><path d="M702.80 1386.70A2.8 2.8 0 0 1 706.80 1386.70L704.80 1388.60Z" fill="#000"/><path d="M909.6 1380.6L914.9 1385.7L912.2 1388.2V1378.2L914.9 1380.8L909.6 1385.9" fill="none" stroke="#000" stroke-width="1" stroke-linejoin="miter"/><rect x="952.7" y="1378.6" width="22" height="9.6" rx="2" fill="none" stroke="#8c8c8c" stroke-width="0.9"/><rect x="954.2" y="1380" width="19" height="6.8" rx="0.8" fill="#000"/><path d="M975.8 1381.9a1.9 1.9 0 0 1 0 3z" fill="#bbb" stroke="#bbb" stroke-width="0.6"/></svg>
<span class="t" style="left:129.9px;top:170px;font-size:20.6px;line-height:20.6px;color:#1c1c1c;letter-spacing:0.43px;-webkit-text-stroke:0.3px;">Insert</span><span class="t" style="left:253.5px;top:170px;font-size:20.6px;line-height:20.6px;color:#1c1c1c;letter-spacing:0.18px;-webkit-text-stroke:0.3px;">Colors</span><span class="t" style="left:383.6px;top:170px;font-size:20.6px;line-height:20.6px;color:#7d7d7d;letter-spacing:0.35px;-webkit-text-stroke:0.3px;">Create Symbol</span><span class="t" style="left:541.7px;top:170px;font-size:20.6px;line-height:20.6px;color:#1c1c1c;letter-spacing:0.22px;-webkit-text-stroke:0.3px;">Symbols</span><span class="t" style="left:642.5px;top:170px;font-size:20.6px;line-height:20.6px;color:#1c1c1c;letter-spacing:0.26px;-webkit-text-stroke:0.3px;">Text Styles</span><span class="t" style="left:855.8px;top:170px;font-size:20.6px;line-height:20.6px;color:#1c1c1c;letter-spacing:-0.23px;-webkit-text-stroke:0.3px;">48%</span><span class="t" style="left:1011.1px;top:170px;font-size:20.6px;line-height:20.6px;color:#7d7d7d;letter-spacing:0.14px;-webkit-text-stroke:0.3px;">Edit</span><span class="t" style="left:1072.7px;top:170px;font-size:20.6px;line-height:20.6px;color:#7d7d7d;letter-spacing:0.29px;-webkit-text-stroke:0.3px;">Transform</span><span class="t" style="left:1185.2px;top:170px;font-size:20.6px;line-height:20.6px;color:#7d7d7d;letter-spacing:0.12px;-webkit-text-stroke:0.3px;">Rotate</span><span class="t" style="left:1265.2px;top:170px;font-size:20.6px;line-height:20.6px;color:#7d7d7d;letter-spacing:0.44px;-webkit-text-stroke:0.3px;">Flatten</span><span class="t" style="left:1399.6px;top:170px;font-size:20.6px;line-height:20.6px;color:#7d7d7d;letter-spacing:-0.33px;-webkit-text-stroke:0.3px;">Mask</span><span class="t" style="left:1467.7px;top:170px;font-size:20.6px;line-height:20.6px;color:#7d7d7d;letter-spacing:-0.26px;-webkit-text-stroke:0.3px;">Scale</span><span class="t" style="left:1587.5px;top:170px;font-size:20.6px;line-height:20.6px;color:#7d7d7d;letter-spacing:0.30px;-webkit-text-stroke:0.3px;">Union</span><span class="t" style="left:1659.8px;top:170px;font-size:20.6px;line-height:20.6px;color:#7d7d7d;letter-spacing:0.50px;-webkit-text-stroke:0.3px;">Subtract</span><span class="t" style="left:1758.8px;top:170px;font-size:20.6px;line-height:20.6px;color:#7d7d7d;letter-spacing:0.62px;-webkit-text-stroke:0.3px;">Intersect</span><span class="t" style="left:1861.4px;top:170px;font-size:20.6px;line-height:20.6px;color:#7d7d7d;letter-spacing:0.62px;-webkit-text-stroke:0.3px;">Difference</span><span class="t" style="left:2029.1px;top:170px;font-size:20.6px;line-height:20.6px;color:#7d7d7d;letter-spacing:0.30px;-webkit-text-stroke:0.3px;">Forward</span><span class="t" style="left:2125.0px;top:170px;font-size:20.6px;line-height:20.6px;color:#7d7d7d;letter-spacing:0.39px;-webkit-text-stroke:0.3px;">Backward</span><span class="t" style="left:2290.1px;top:170px;font-size:20.6px;line-height:20.6px;color:#1c1c1c;letter-spacing:-0.56px;-webkit-text-stroke:0.3px;">View</span><span class="t" style="left:2409.3px;top:170px;font-size:20.6px;line-height:20.6px;color:#1c1c1c;letter-spacing:0.28px;-webkit-text-stroke:0.3px;">Export</span><span class="t" style="left:1247.6px;top:74px;font-size:27px;line-height:27px;color:#3a3a3a;letter-spacing:0.05px;-webkit-text-stroke:0.3px;">3m5.sketch</span><span class="t" style="left:2336.1px;top:73px;font-size:21.2px;line-height:21.2px;color:#57524f;letter-spacing:0.37px;-webkit-text-stroke:0.3px;-webkit-text-stroke:0.55px;">Missing Fonts</span><span class="t" style="left:132.2px;top:217px;font-size:23.3px;line-height:23.3px;color:#111;letter-spacing:-0.94px;-webkit-text-stroke:0.3px;">Pages</span><span class="t" style="left:162.7px;top:273px;font-size:23.3px;line-height:23.3px;color:#000;letter-spacing:-0.17px;-webkit-text-stroke:0.3px;">Screens iPhone 8</span><span class="t" style="left:161.8px;top:327px;font-size:23.3px;line-height:23.3px;color:#000;letter-spacing:-0.22px;-webkit-text-stroke:0.3px;">Logo</span><span class="t" style="left:162.7px;top:381px;font-size:23.3px;line-height:23.3px;color:#fff;letter-spacing:-0.27px;-webkit-text-stroke:0.3px;">Symbols</span><span class="t" style="left:162.7px;top:435px;font-size:23.3px;line-height:23.3px;color:#000;letter-spacing:-0.11px;-webkit-text-stroke:0.3px;">Styles</span><span class="t" style="left:132.6px;top:548px;font-size:23.3px;line-height:23.3px;color:#7a7a7a;letter-spacing:-0.30px;-webkit-text-stroke:0.3px;">Symbols</span><span class="t" style="left:209.9px;top:603px;font-size:23.3px;line-height:23.3px;color:#000;letter-spacing:0.48px;-webkit-text-stroke:0.3px;">Misc/Notification</span><span class="t" style="left:242.1px;top:657px;font-size:23.3px;line-height:23.3px;color:#000;letter-spacing:0.47px;-webkit-text-stroke:0.3px;">Notification</span><span class="t" style="left:300.1px;top:711px;font-size:23.3px;line-height:23.3px;color:#000;letter-spacing:-0.36px;-webkit-text-stroke:0.3px;">Header</span><span class="t" style="left:306.3px;top:765px;font-size:23.3px;line-height:23.3px;color:#000;letter-spacing:0.33px;-webkit-text-stroke:0.3px;">Notification Icon</span><span class="t" style="left:308.2px;top:819px;font-size:23.3px;line-height:23.3px;color:#000;letter-spacing:-0.59px;-webkit-text-stroke:0.3px;">App Name</span><span class="t" style="left:307.7px;top:873px;font-size:23.3px;line-height:23.3px;color:#000;letter-spacing:-0.10px;-webkit-text-stroke:0.3px;">Timestamp</span><span class="t" style="left:301.5px;top:927px;font-size:23.3px;line-height:23.3px;color:#000;letter-spacing:0.13px;-webkit-text-stroke:0.3px;">Title</span><span class="t" style="left:300.1px;top:981px;font-size:23.3px;line-height:23.3px;color:#000;letter-spacing:-0.72px;-webkit-text-stroke:0.3px;">Body</span><span class="t" style="left:273.8px;top:1035px;font-size:23.3px;line-height:23.3px;color:#000;letter-spacing:0.05px;-webkit-text-stroke:0.3px;">Background</span><span class="t" style="left:209.9px;top:1089px;font-size:23.3px;line-height:23.3px;color:#000;letter-spacing:0.39px;-webkit-text-stroke:0.3px;">Button</span><span class="t" style="left:242.1px;top:1143px;font-size:23.3px;line-height:23.3px;color:#000;letter-spacing:-0.09px;-webkit-text-stroke:0.3px;">Rectangle</span><span class="t" style="left:210.3px;top:1197px;font-size:23.3px;line-height:23.3px;color:#9a9a9a;letter-spacing:-0.08px;-webkit-text-stroke:0.3px;">Rectangle 2</span><span class="t" style="left:211.2px;top:1251px;font-size:23.3px;line-height:23.3px;color:#000;letter-spacing:0.04px;-webkit-text-stroke:0.3px;">Overrides/Status Bar/Signal -...</span><span class="t" style="left:242.8px;top:1305px;font-size:23.3px;line-height:23.3px;color:#000;letter-spacing:-0.62px;-webkit-text-stroke:0.3px;">Group</span><span class="t" style="left:210.3px;top:1359px;font-size:23.3px;line-height:23.3px;color:#000;letter-spacing:-0.01px;-webkit-text-stroke:0.3px;">Bars/Status/Black</span><span class="t" style="left:243.0px;top:1413px;font-size:23.3px;line-height:23.3px;color:#000;letter-spacing:-0.52px;-webkit-text-stroke:0.3px;">Signal</span><span class="t" style="left:243.5px;top:1467px;font-size:23.3px;line-height:23.3px;color:#000;letter-spacing:-0.63px;-webkit-text-stroke:0.3px;">Time</span><span class="t" style="left:241.7px;top:1521px;font-size:23.3px;line-height:23.3px;color:#000;letter-spacing:-0.26px;-webkit-text-stroke:0.3px;">Pin Right</span><span class="t" style="left:308.3px;top:1609px;font-size:23.3px;line-height:23.3px;color:#b3b3b3;letter-spacing:0.08px;-webkit-text-stroke:0.3px;">Filter</span><span class="t" style="left:626.0px;top:601px;font-size:22.8px;line-height:22.8px;color:#a45fc6;letter-spacing:-0.91px;">BG</span><span class="t" style="left:1087.5px;top:601px;font-size:22.8px;line-height:22.8px;color:#a45fc6;letter-spacing:-0.75px;">Over…Black</span><span class="t" style="left:1319.1px;top:601px;font-size:22.8px;line-height:22.8px;color:#a45fc6;letter-spacing:0.40px;">Button</span><span class="t" style="left:1582.8px;top:601px;font-size:22.8px;line-height:22.8px;color:#a45fc6;letter-spacing:0.68px;">Misc/Notification</span><span class="t" style="left:625.6px;top:1343px;font-size:22.8px;line-height:22.8px;color:#a45fc6;letter-spacing:0.30px;">Bars/Status/Black</span><span class="t" style="left:2076.4px;top:282px;font-size:22.6px;line-height:22.6px;color:#111;letter-spacing:0.32px;-webkit-text-stroke:0.3px;">Position</span><span class="t" style="left:2077.2px;top:352px;font-size:22.6px;line-height:22.6px;color:#111;letter-spacing:-0.71px;-webkit-text-stroke:0.3px;">Size</span><span class="t" style="left:2077.7px;top:422px;font-size:22.6px;line-height:22.6px;color:#111;letter-spacing:0.23px;-webkit-text-stroke:0.3px;">Transform</span><span class="t" style="left:2255.4px;top:315px;font-size:19px;line-height:19px;color:#111;-webkit-text-stroke:0.3px;">X</span><span class="t" style="left:2403.3px;top:315px;font-size:19px;line-height:19px;color:#111;-webkit-text-stroke:0.3px;">Y</span><span class="t" style="left:2237.9px;top:385px;font-size:19px;line-height:19px;color:#111;letter-spacing:0.12px;-webkit-text-stroke:0.3px;">Width</span><span class="t" style="left:2380.7px;top:385px;font-size:19px;line-height:19px;color:#111;letter-spacing:0.24px;-webkit-text-stroke:0.3px;">Height</span><span class="t" style="left:2231.3px;top:455px;font-size:19px;line-height:19px;color:#111;-webkit-text-stroke:0.3px;">Rotate</span><span class="t" style="left:2394.3px;top:455px;font-size:19px;line-height:19px;color:#111;letter-spacing:-0.27px;-webkit-text-stroke:0.3px;">Flip</span><span class="t" style="left:2076.8px;top:504px;font-size:22.2px;line-height:22.2px;color:#4e4e4e;font-weight:700;letter-spacing:-0.22px;">Fills</span><span class="t" style="left:2076.8px;top:556px;font-size:22.2px;line-height:22.2px;color:#4e4e4e;font-weight:700;letter-spacing:0.20px;">Borders</span><span class="t" style="left:2077.5px;top:608px;font-size:22.2px;line-height:22.2px;color:#4e4e4e;font-weight:700;letter-spacing:0.10px;">Shadows</span><span class="t" style="left:2076.8px;top:660px;font-size:22.2px;line-height:22.2px;color:#4e4e4e;font-weight:700;letter-spacing:0.42px;">Inner Shadows</span><span class="t" style="left:2077.3px;top:712px;font-size:22.2px;line-height:22.2px;color:#4e4e4e;font-weight:700;letter-spacing:0.05px;">Gaussian Blur</span><span class="t" style="left:1105.2px;top:638px;font-size:11.6px;line-height:11.6px;color:#000;letter-spacing:-0.05px;">Auenland</span><span class="t" style="left:645.9px;top:1379px;font-size:11.6px;line-height:11.6px;color:#000;">Auenland</span><span class="t" style="left:779.9px;top:1379px;font-size:11.6px;line-height:11.6px;color:#000;letter-spacing:0.18px;">4:20 PM</span><span class="t" style="left:918.9px;top:1379px;font-size:11.6px;line-height:11.6px;color:#000;letter-spacing:0.16px;">100%</span><span class="t" style="left:1610.6px;top:647px;font-size:12.3px;line-height:12.3px;color:#8e8e93;letter-spacing:-0.28px;">MESSAGES</span><span class="t" style="left:1882.9px;top:647px;font-size:12.3px;line-height:12.3px;color:#8e8e93;letter-spacing:0.81px;">now</span><span class="t" style="left:1588.0px;top:672px;font-size:14.8px;line-height:14.8px;color:#000;letter-spacing:-0.61px;">Success</span><span class="t" style="left:1588.3px;top:692px;font-size:14.8px;line-height:14.8px;color:#000;letter-spacing:-0.53px;">Your QR Code is: 42</span>
</body></html>
